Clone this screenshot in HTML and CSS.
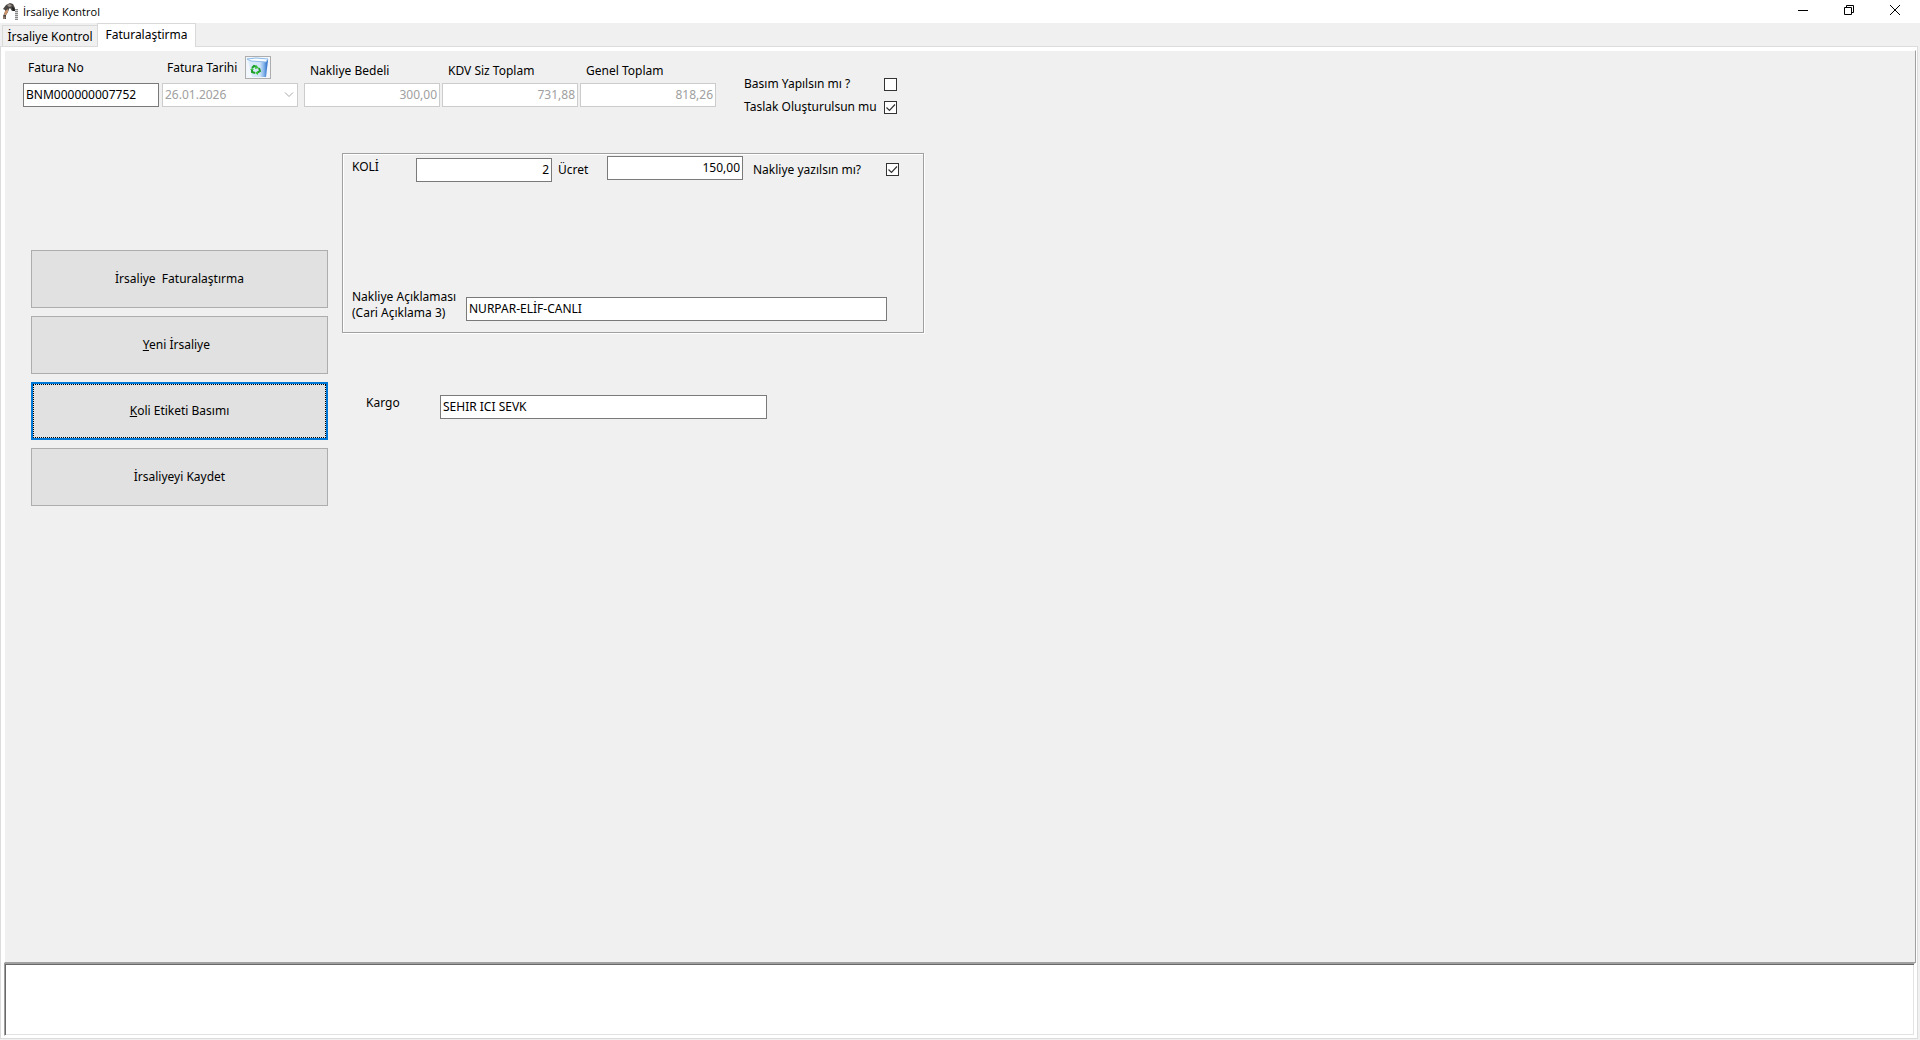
FILE: index.html
```html
<!DOCTYPE html>
<html lang="tr">
<head>
<meta charset="utf-8">
<title>İrsaliye Kontrol</title>
<link rel="stylesheet" href="styles.css">
</head>
<body>
<header class="titlebar">
  <svg class="app-icon" width="18" height="18" viewBox="0 0 18 18" aria-hidden="true">
    <path d="M1 6 L4 2 L8 0 L11 1 L13 5 L13 8 L10 8 L8 5 L7 6 L6 9 L4 12 L4 16 L1 16 L1 13 L3 9 L3 7 Z" fill="#4a4643"/>
    <path d="M5 2l3-1 2 2-3 1z" fill="#a09690"/>
    <path d="M3 8l3-2 0 3-2 3-2 0z" fill="#c9936c"/>
    <path d="M1 13l3 1-1 2H1z" fill="#8f7768"/>
    <path d="M10 4l2 1 1 3-2 0z" fill="#1d1c1c"/>
    <path d="M13 6.500h3M13 8.500h3M13 10.500h3M13 12.500h3M13 14.500h3M13 16.500h3" stroke="#8a8a8a"/>
    <path d="M13 7.500h3M13 9.500h3M13 11.500h3M13 13.500h3M13 15.500h3" stroke="#d4d4d4"/>
  </svg>
  <h1 class="title">İrsaliye Kontrol</h1>
  <div class="window-controls">
    <button class="window-button" type="button" aria-label="Simge durumuna küçült"><svg width="10" height="10" viewBox="0 0 10 10"><path d="M0 5.500h10" stroke="#000"/></svg></button>
    <button class="window-button" type="button" aria-label="Önceki boyut"><svg width="10" height="10" viewBox="0 0 10 10"><path d="M.5 2.500h7v7h-7zM2.500 2.500v-2h7v7h-2" fill="none" stroke="#000"/></svg></button>
    <button class="window-button" type="button" aria-label="Kapat"><svg width="10" height="10" viewBox="0 0 10 10"><path d="M0 0l10 10M10 0L0 10" stroke="#000"/></svg></button>
  </div>
</header>

<nav class="tabs" role="tablist">
  <button class="tab" type="button" role="tab" aria-selected="false">İrsaliye Kontrol</button>
  <button class="tab tab-active" type="button" role="tab" aria-selected="true">Faturalaştirma</button>
</nav>

<main class="page">
  <form class="panel">
    <section class="summary">
      <div class="field">
        <div class="field-head"><label for="no">Fatura No</label></div>
        <input class="box" id="no" value="BNM000000007752">
      </div>
      <div class="field field-date">
        <div class="field-head">
          <label class="date-label" for="tarih">Fatura Tarihi</label>
          <button class="bin-button" type="button" aria-label="Temizle">
            <svg width="24" height="21" viewBox="0 0 24 21">
              <defs><linearGradient id="bin" x1="0" x2="1"><stop offset="0" stop-color="#dcecfb"/><stop offset=".6" stop-color="#cfe3f8"/><stop offset=".8" stop-color="#7fb2ea"/><stop offset="1" stop-color="#1f62c0"/></linearGradient></defs>
              <path d="M0 0h24v21H0z" fill="#f1f7fd"/>
              <path d="M2 3L22 3L20 20H6z" fill="url(#bin)"/>
              <path d="M1 2L10 1L22 2L20 5L5 4z" fill="#fafdff" stroke="#8db9e8"/>
              <g fill="none" stroke="#1f9e2c" stroke-width="2"><path d="M6 11l2-2 3 1"/><path d="M13 11l1 3-3 2"/><path d="M9 16l-3-1v-3"/></g>
              <path d="M10 8l3 3-4 1zM12 18l-3-2 3-2zM4 13l2-2 2 2z" fill="#37c43c"/>
            </svg>
          </button>
        </div>
        <div class="date">
          <select class="box" id="tarih" disabled><option>26.01.2026</option></select>
        </div>
      </div>
      <div class="field field-spaced">
        <div class="field-head field-head-low"><label for="bedel">Nakliye Bedeli</label></div>
        <input class="box box-number" id="bedel" value="300,00" disabled>
      </div>
      <div class="field">
        <div class="field-head field-head-low"><label for="kdv">KDV Siz Toplam</label></div>
        <input class="box box-number" id="kdv" value="731,88" disabled>
      </div>
      <div class="field">
        <div class="field-head field-head-low"><label for="genel">Genel Toplam</label></div>
        <input class="box box-number" id="genel" value="818,26" disabled>
      </div>
      <div class="options">
        <label for="basim">Basım Yapılsın mı ?</label><input class="check" id="basim" type="checkbox">
        <label for="taslak">Taslak Oluşturulsun mu</label><input class="check" id="taslak" type="checkbox" checked>
      </div>
    </section>

    <div class="work">
      <div class="actions">
        <button class="action" type="button">İrsaliye&nbsp; Faturalaştırma</button>
        <button class="action" type="button"><span><u>Y</u>eni İrsaliye&nbsp;&nbsp;</span></button>
        <button class="action action-focused" type="button"><span><u>K</u>oli Etiketi Basımı</span></button>
        <button class="action" type="button">İrsaliyeyi Kaydet</button>
      </div>
      <div class="details">
        <section class="group">
          <div class="group-row">
            <label class="koli-label" for="koli">KOLİ</label>
            <input class="box box-number koli-box" id="koli" value="2">
            <label class="ucret-label" for="ucret">Ücret</label>
            <input class="box box-number ucret-box" id="ucret" value="150,00">
            <label class="yaz-label" for="yaz">Nakliye yazılsın mı?</label>
            <input class="check" id="yaz" type="checkbox" checked>
          </div>
          <div class="group-row group-note">
            <label class="note-label" for="aciklama">Nakliye Açıklaması<br>(Cari Açıklama 3)</label>
            <input class="box note-box" id="aciklama" value="NURPAR-ELİF-CANLI">
          </div>
        </section>
        <div class="cargo">
          <label class="cargo-label" for="kargo">Kargo</label>
          <input class="box cargo-box" id="kargo" value="SEHIR ICI SEVK">
        </div>
      </div>
    </div>
  </form>
  <textarea class="memo" aria-label="Mesajlar"></textarea>
</main>
</body>
</html>
```
FILE: styles.css
```css
* {
  box-sizing: border-box;
}

body {
  margin: 0;
  min-height: 100vh;
  display: flex;
  flex-direction: column;
  background: #f0f0f0;
  color: #000;
  font: 12px/16px Tahoma, "Noto Sans", sans-serif;
}

button,
input,
select,
textarea {
  margin: 0;
  color: inherit;
  font: inherit;
}

/* Title bar */
.titlebar {
  display: flex;
  align-items: center;
  height: 23px;
  padding-left: 2px;
  background: #fff;
}

.app-icon {
  margin-right: 3px;
}

.title {
  flex: 1;
  margin: 0;
  font: 11px/16px "Segoe UI", "Open Sans", sans-serif;
}

.window-controls {
  display: flex;
  align-self: flex-start;
  padding-right: 2px;
}

.window-button {
  display: grid;
  place-items: center;
  width: 46px;
  height: 20px;
  padding: 0;
  border: 0;
  background: none;
}

/* Tabs */
.tabs {
  display: flex;
  align-items: flex-end;
  height: 23px;
  padding-left: 2px;
}

.tab {
  height: 21px;
  width: 95px;
  padding: 1px 0 0;
  border: 1px solid #d9d9d9;
  border-width: 1px 0 0 1px;
  background: #f0f0f0;
  white-space: nowrap;
}

.tab-active {
  position: relative;
  width: 99px;
  height: 24px;
  margin-bottom: -1px;
  padding: 0 0 2px;
  border-width: 1px 1px 0;
  background: #fff;
}

/* Page */
.page {
  flex: 1;
  display: flex;
  flex-direction: column;
  margin: 0 2px 1px 0;
  padding: 3px 1px 2px 3px;
  border: 1px solid #dcdcdc;
  background: #fff;
}

.panel {
  flex: 1;
  border: 1px solid;
  border-color: #fff #a0a0a0 #a0a0a0 #fff;
  background: #f0f0f0;
}

.memo {
  height: 73px;
  margin-right: 1px;
  resize: none;
  outline: 0;
  border: 1px solid;
  border-color: #a0a0a0 #fff #fff #a0a0a0;
  border-radius: 0;
  box-shadow: inset 1px 1px #696969, inset -1px -1px #e3e3e3;
  background: #fff;
}

/* Shared controls */
.box {
  width: 136px;
  height: 24px;
  padding: 0 2px 2px;
  border: 1px solid #7a7a7a;
  border-radius: 0;
  outline: 0;
  background: #fff;
}

.box:disabled {
  border-color: #ccc;
  color: #a0a0a0;
  opacity: 1;
}

.box-number {
  text-align: right;
}

select.box {
  appearance: none;
  padding-bottom: 0;
  background: #fff url("data:image/svg+xml,%3Csvg xmlns='http://www.w3.org/2000/svg' width='10' height='6'%3E%3Cpath d='M1 .5l4 4 4-4' fill='none' stroke='%23a8a8a8'/%3E%3C/svg%3E") no-repeat right 3px center;
}

.check {
  appearance: none;
  width: 13px;
  height: 13px;
  border: 1px solid #333;
  background: #fff;
}

.check:checked {
  background: #fff url("data:image/svg+xml,%3Csvg xmlns='http://www.w3.org/2000/svg' width='11' height='11'%3E%3Cpath d='M1.500 5.500l3 3 5.500-6' fill='none' stroke='%23333' stroke-width='1.200'/%3E%3C/svg%3E") center no-repeat;
}

/* Summary row */
.summary {
  display: flex;
  align-items: flex-end;
  gap: 2px;
  height: 56px;
  padding-left: 18px;
}

.field-date {
  margin-left: 1px;
}

.field-spaced {
  margin-left: 4px;
}

.field-head {
  display: flex;
  align-items: center;
  gap: 4px;
  height: 23px;
  margin-bottom: 4px;
  padding-left: 5px;
}

.field-head-low {
  margin-bottom: 1px;
  padding-left: 6px;
}

.date-label {
  width: 74px;
}

.bin-button {
  display: grid;
  place-items: center;
  width: 26px;
  height: 23px;
  padding: 0;
  border: 1px solid #adadad;
  background: #e1e1e1;
}

.date {
  display: flex;
}

.options {
  display: grid;
  grid-template-columns: 140px 13px;
  align-items: center;
  row-gap: 7px;
  margin: 0 0 -8px 26px;
  white-space: nowrap;
}

/* Work area */
.work {
  display: flex;
  gap: 14px;
  margin-top: 46px;
  padding-left: 26px;
}

.actions {
  display: flex;
  flex-direction: column;
  gap: 8px;
  width: 297px;
  margin-top: 97px;
}

.action {
  height: 58px;
  padding: 0;
  border: 1px solid #adadad;
  background: #e1e1e1;
}

.action-focused {
  border: 2px solid #0078d7;
  outline: 1px dotted #000;
  outline-offset: -3px;
}

.group {
  display: flex;
  flex-direction: column;
  justify-content: space-between;
  width: 582px;
  height: 180px;
  padding: 2px 9px 11px;
  border: 1px solid #a0a0a0;
  box-shadow: inset 1px 1px #fff, 1px 1px #fff;
}

.group-row {
  display: flex;
  align-items: center;
}

.koli-label {
  width: 64px;
  padding-bottom: 4px;
}

.koli-box {
  margin-top: 2px;
}

.ucret-label {
  width: 55px;
  padding: 2px 0 0 6px;
}

.ucret-box {
  align-self: flex-start;
}

.yaz-label {
  width: 143px;
  padding: 2px 0 0 10px;
}

.note-label {
  width: 114px;
}

.note-box {
  width: 421px;
}

.group-note {
  align-items: flex-end;
}

.cargo {
  display: flex;
  margin-top: 62px;
  padding-left: 24px;
}

.cargo-label {
  width: 74px;
}

.cargo-box {
  width: 327px;
}
```
